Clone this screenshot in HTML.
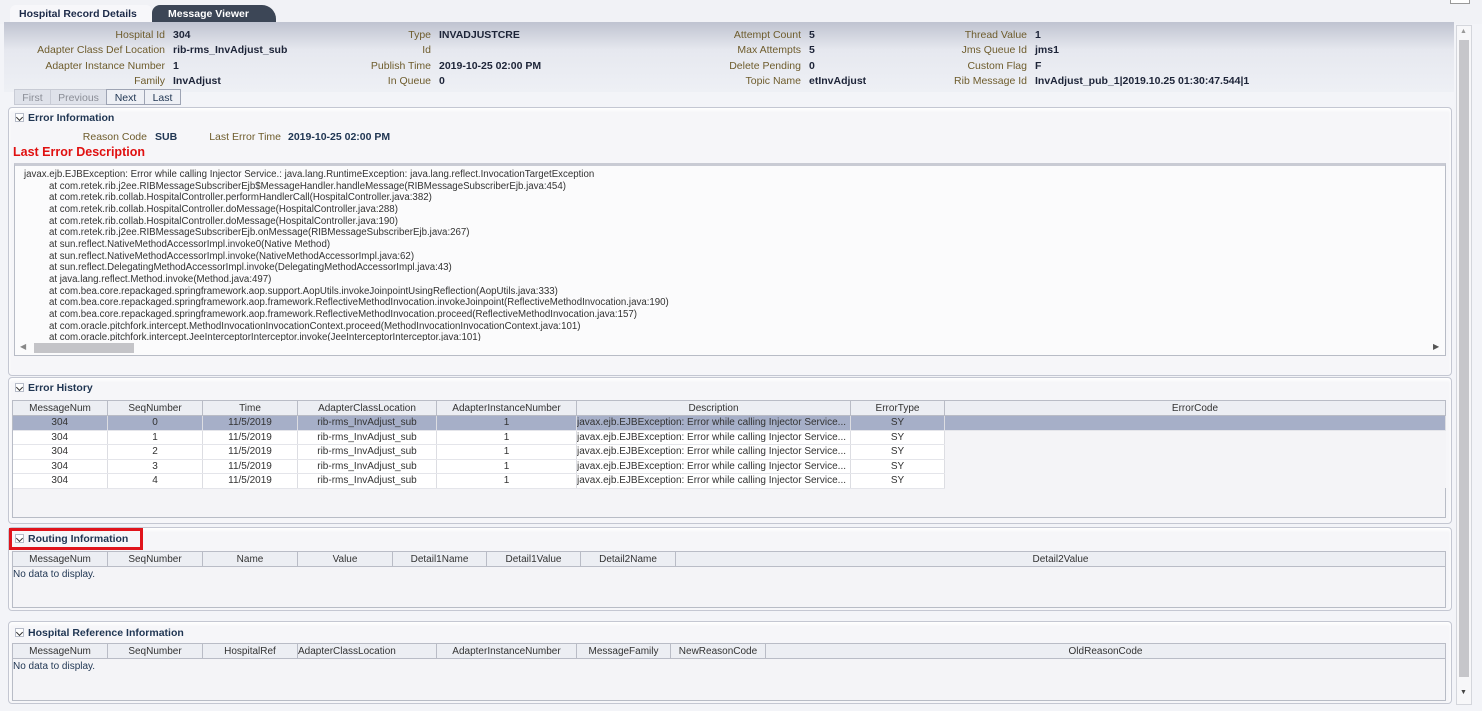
<!DOCTYPE html>
<html><head><meta charset="utf-8"><style>
*{margin:0;padding:0;box-sizing:border-box}
body{width:1482px;height:711px;background:#f3f4f8;font-family:"Liberation Sans",Arial,sans-serif;font-size:10.5px;color:#222;position:relative;overflow:hidden}
.a{position:absolute;white-space:nowrap}
.lab{color:#6e5c2c;text-align:right}
.val{font-weight:bold;color:#1d2438}
.panel{position:absolute;left:8px;width:1444px;background:#f6f6f9;border:1px solid #c4c7d2;border-radius:4px;box-shadow:inset 0 2px 3px #fff}
.ph{position:absolute;left:6px;font-weight:bold;color:#1f3552;font-size:10.5px}
.tw{display:inline-block;width:9px;height:9px;border:1px solid #b7bcc9;background:#fff;margin-right:4px;vertical-align:-1px;position:relative}
.tw:after{content:"";position:absolute;left:1px;top:1px;width:4px;height:4px;border-right:1px solid #333;border-bottom:1px solid #333;transform:rotate(45deg)}
table{position:absolute;border-collapse:collapse;table-layout:fixed;font-size:10px}
th{font-weight:normal;color:#333;background:#eceef3;border:1px solid #b9bcc6;height:15px;text-align:center;white-space:nowrap;overflow:hidden}
td{height:14.5px;line-height:13px;text-align:center;border-right:1px solid #dcdde2;border-bottom:1px solid #e4e5ea;background:#fff;color:#333;white-space:nowrap;overflow:hidden;padding:0}
tr.sel td{background:#a6afc8}
.box{position:absolute;border:1px solid #b8bcc6;background:#fbfbfc}
</style></head><body>
<div class="a" style="left:0;top:0;width:1482px;height:24px;background:#f1f2f6"></div>
<div class="a" style="left:10px;top:5px;width:142px;height:18px;background:#f7f7fa;border-radius:6px 6px 0 0;font-weight:bold;color:#1c2a48;font-size:10.5px;padding:3px 0 0 9px">Hospital Record Details</div>
<div class="a" style="left:152px;top:5px;width:124px;height:17px;background:#3c4656;border-radius:8px 14px 0 0;font-weight:bold;color:#fff;font-size:10.5px;padding:3px 0 0 16px">Message Viewer</div>
<div class="a" style="left:1450px;top:0;width:20px;height:4px;border:1px solid #999;border-top:0;background:#fff"></div>
<div class="a" style="left:4px;top:22px;width:1450px;height:70px;background:linear-gradient(#bfc3d0,#e6e8ef 40%,#eef0f5)"></div>
<div class="a lab" style="left:0;width:165px;top:29px">Hospital Id</div><div class="a val" style="left:173px;top:29px">304</div>
<div class="a lab" style="left:0;width:165px;top:44px">Adapter Class Def Location</div><div class="a val" style="left:173px;top:44px">rib-rms_InvAdjust_sub</div>
<div class="a lab" style="left:0;width:165px;top:60px">Adapter Instance Number</div><div class="a val" style="left:173px;top:60px">1</div>
<div class="a lab" style="left:0;width:165px;top:75px">Family</div><div class="a val" style="left:173px;top:75px">InvAdjust</div>
<div class="a lab" style="left:300px;width:131px;top:29px">Type</div><div class="a val" style="left:439px;top:29px">INVADJUSTCRE</div>
<div class="a lab" style="left:300px;width:131px;top:44px">Id</div>
<div class="a lab" style="left:300px;width:131px;top:60px">Publish Time</div><div class="a val" style="left:439px;top:60px">2019-10-25 02:00 PM</div>
<div class="a lab" style="left:300px;width:131px;top:75px">In Queue</div><div class="a val" style="left:439px;top:75px">0</div>
<div class="a lab" style="left:600px;width:201px;top:29px">Attempt Count</div><div class="a val" style="left:809px;top:29px">5</div>
<div class="a lab" style="left:600px;width:201px;top:44px">Max Attempts</div><div class="a val" style="left:809px;top:44px">5</div>
<div class="a lab" style="left:600px;width:201px;top:60px">Delete Pending</div><div class="a val" style="left:809px;top:60px">0</div>
<div class="a lab" style="left:600px;width:201px;top:75px">Topic Name</div><div class="a val" style="left:809px;top:75px">etInvAdjust</div>
<div class="a lab" style="left:900px;width:127px;top:29px">Thread Value</div><div class="a val" style="left:1035px;top:29px">1</div>
<div class="a lab" style="left:900px;width:127px;top:44px">Jms Queue Id</div><div class="a val" style="left:1035px;top:44px">jms1</div>
<div class="a lab" style="left:900px;width:127px;top:60px">Custom Flag</div><div class="a val" style="left:1035px;top:60px">F</div>
<div class="a lab" style="left:900px;width:127px;top:75px">Rib Message Id</div><div class="a val" style="left:1035px;top:75px">InvAdjust_pub_1|2019.10.25 01:30:47.544|1</div>
<div class="a" style="left:14px;top:89px;width:37px;height:16px;background:#dfe2ea;border:1px solid #c8cbd5;color:#8a8d96;text-align:center;padding-top:2px">First</div>
<div class="a" style="left:50px;top:89px;width:57px;height:16px;background:#dfe2ea;border:1px solid #c8cbd5;color:#8a8d96;text-align:center;padding-top:2px">Previous</div>
<div class="a" style="left:106px;top:89px;width:39px;height:16px;background:#eef0f5;border:1px solid #9ea4b4;color:#1f3552;text-align:center;padding-top:2px">Next</div>
<div class="a" style="left:144px;top:89px;width:37px;height:16px;background:#eef0f5;border:1px solid #9ea4b4;color:#1f3552;text-align:center;padding-top:2px">Last</div>
<div class="panel" style="top:107px;height:269px">
 <div class="ph" style="top:4px"><span class="tw"></span>Error Information</div>
 <div class="a lab" style="left:40px;width:98px;top:23px">Reason Code</div><div class="a val" style="left:146px;top:23px;color:#1f3552">SUB</div>
 <div class="a lab" style="left:180px;width:92px;top:23px">Last Error Time</div><div class="a val" style="left:279px;top:23px;color:#1f3552">2019-10-25 02:00 PM</div>
 <div class="a" style="left:4px;top:37px;color:#e01010;font-weight:bold;font-size:12.5px">Last Error Description</div>
 <div class="box" style="left:5px;top:55px;width:1432px;height:193px;overflow:hidden;background:#fbfbfc;border-top:3px solid #c9cbd4">
  <div class="a" style="left:9px;top:3px;line-height:11.65px;font-size:9.7px;color:#333">javax.ejb.EJBException: Error while calling Injector Service.: java.lang.RuntimeException: java.lang.reflect.InvocationTargetException<br>
<span style="padding-left:25px"></span>at com.retek.rib.j2ee.RIBMessageSubscriberEjb$MessageHandler.handleMessage(RIBMessageSubscriberEjb.java:454)<br>
<span style="padding-left:25px"></span>at com.retek.rib.collab.HospitalController.performHandlerCall(HospitalController.java:382)<br>
<span style="padding-left:25px"></span>at com.retek.rib.collab.HospitalController.doMessage(HospitalController.java:288)<br>
<span style="padding-left:25px"></span>at com.retek.rib.collab.HospitalController.doMessage(HospitalController.java:190)<br>
<span style="padding-left:25px"></span>at com.retek.rib.j2ee.RIBMessageSubscriberEjb.onMessage(RIBMessageSubscriberEjb.java:267)<br>
<span style="padding-left:25px"></span>at sun.reflect.NativeMethodAccessorImpl.invoke0(Native Method)<br>
<span style="padding-left:25px"></span>at sun.reflect.NativeMethodAccessorImpl.invoke(NativeMethodAccessorImpl.java:62)<br>
<span style="padding-left:25px"></span>at sun.reflect.DelegatingMethodAccessorImpl.invoke(DelegatingMethodAccessorImpl.java:43)<br>
<span style="padding-left:25px"></span>at java.lang.reflect.Method.invoke(Method.java:497)<br>
<span style="padding-left:25px"></span>at com.bea.core.repackaged.springframework.aop.support.AopUtils.invokeJoinpointUsingReflection(AopUtils.java:333)<br>
<span style="padding-left:25px"></span>at com.bea.core.repackaged.springframework.aop.framework.ReflectiveMethodInvocation.invokeJoinpoint(ReflectiveMethodInvocation.java:190)<br>
<span style="padding-left:25px"></span>at com.bea.core.repackaged.springframework.aop.framework.ReflectiveMethodInvocation.proceed(ReflectiveMethodInvocation.java:157)<br>
<span style="padding-left:25px"></span>at com.oracle.pitchfork.intercept.MethodInvocationInvocationContext.proceed(MethodInvocationInvocationContext.java:101)<br>
<span style="padding-left:25px"></span>at com.oracle.pitchfork.intercept.JeeInterceptorInterceptor.invoke(JeeInterceptorInterceptor.java:101)</div>
  <div class="a" style="left:0;top:175px;width:1430px;height:14px;background:#fbfbfc"></div>
  <div class="a" style="left:5px;top:176px;color:#888;font-size:8px">◀</div>
  <div class="a" style="left:19px;top:177px;width:100px;height:10px;background:#c4c4c8"></div>
  <div class="a" style="left:1418px;top:176px;color:#555;font-size:8px">▶</div>
 </div>
</div>
<div class="panel" style="top:377px;height:147px">
 <div class="ph" style="top:4px"><span class="tw"></span>Error History</div>
 <div class="box" style="left:3px;top:22px;width:1434px;height:118px;background:#f4f4f7"></div>
</div>
<table style="left:12px;top:400px;width:1434px">
<colgroup><col style="width:95px"><col style="width:95px"><col style="width:95px"><col style="width:139px"><col style="width:140px"><col style="width:274px"><col style="width:94px"><col></colgroup>
<tr><th>MessageNum</th><th>SeqNumber</th><th>Time</th><th>AdapterClassLocation</th><th>AdapterInstanceNumber</th><th>Description</th><th>ErrorType</th><th>ErrorCode</th></tr>
<tr class="sel"><td>304</td><td>0</td><td>11/5/2019</td><td>rib-rms_InvAdjust_sub</td><td>1</td><td style="text-align:left">javax.ejb.EJBException: Error while calling Injector Service...</td><td>SY</td><td></td></tr>
<tr><td>304</td><td>1</td><td>11/5/2019</td><td>rib-rms_InvAdjust_sub</td><td>1</td><td style="text-align:left">javax.ejb.EJBException: Error while calling Injector Service...</td><td>SY</td><td style="background:#f4f4f7;border:0"></td></tr>
<tr><td>304</td><td>2</td><td>11/5/2019</td><td>rib-rms_InvAdjust_sub</td><td>1</td><td style="text-align:left">javax.ejb.EJBException: Error while calling Injector Service...</td><td>SY</td><td style="background:#f4f4f7;border:0"></td></tr>
<tr><td>304</td><td>3</td><td>11/5/2019</td><td>rib-rms_InvAdjust_sub</td><td>1</td><td style="text-align:left">javax.ejb.EJBException: Error while calling Injector Service...</td><td>SY</td><td style="background:#f4f4f7;border:0"></td></tr>
<tr><td>304</td><td>4</td><td>11/5/2019</td><td>rib-rms_InvAdjust_sub</td><td>1</td><td style="text-align:left">javax.ejb.EJBException: Error while calling Injector Service...</td><td>SY</td><td style="background:#f4f4f7;border:0"></td></tr>
</table>
<div class="panel" style="top:527px;height:84px">
 <div class="ph" style="top:5px"><span class="tw"></span>Routing Information</div>
 <div class="box" style="left:3px;top:23px;width:1434px;height:57px;background:#f4f4f7"></div>
</div>
<div class="a" style="left:9px;top:528px;width:134px;height:22px;border:3px solid #e0141c"></div>
<table style="left:12px;top:551px;width:1434px">
<colgroup><col style="width:95px"><col style="width:95px"><col style="width:95px"><col style="width:95px"><col style="width:94px"><col style="width:94px"><col style="width:95px"><col></colgroup>
<tr><th>MessageNum</th><th>SeqNumber</th><th>Name</th><th>Value</th><th>Detail1Name</th><th>Detail1Value</th><th>Detail2Name</th><th>Detail2Value</th></tr>
</table>
<div class="a" style="left:13px;top:569px;color:#1f3552;font-size:10px">No data to display.</div>
<div class="panel" style="top:621px;height:83px">
 <div class="ph" style="top:5px"><span class="tw"></span>Hospital Reference Information</div>
 <div class="box" style="left:3px;top:21px;width:1434px;height:58px;background:#f4f4f7"></div>
</div>
<table style="left:12px;top:643px;width:1434px">
<colgroup><col style="width:95px"><col style="width:95px"><col style="width:95px"><col style="width:139px"><col style="width:140px"><col style="width:94px"><col style="width:95px"><col></colgroup>
<tr><th>MessageNum</th><th>SeqNumber</th><th>HospitalRef</th><th style="text-align:left">AdapterClassLocation</th><th>AdapterInstanceNumber</th><th>MessageFamily</th><th>NewReasonCode</th><th>OldReasonCode</th></tr>
</table>
<div class="a" style="left:13px;top:661px;color:#1f3552;font-size:10px">No data to display.</div>
<div class="a" style="left:1456px;top:25px;width:16px;height:680px;background:#f7f7f9;border:1px solid #d4d6dc"></div>
<div class="a" style="left:1459px;top:40px;width:10px;height:637px;background:#c6c6ca"></div>
<div class="a" style="left:1460px;top:28px;color:#999;font-size:7px">▲</div>
<div class="a" style="left:1460px;top:689px;color:#444;font-size:7px">▼</div>
</body></html>
